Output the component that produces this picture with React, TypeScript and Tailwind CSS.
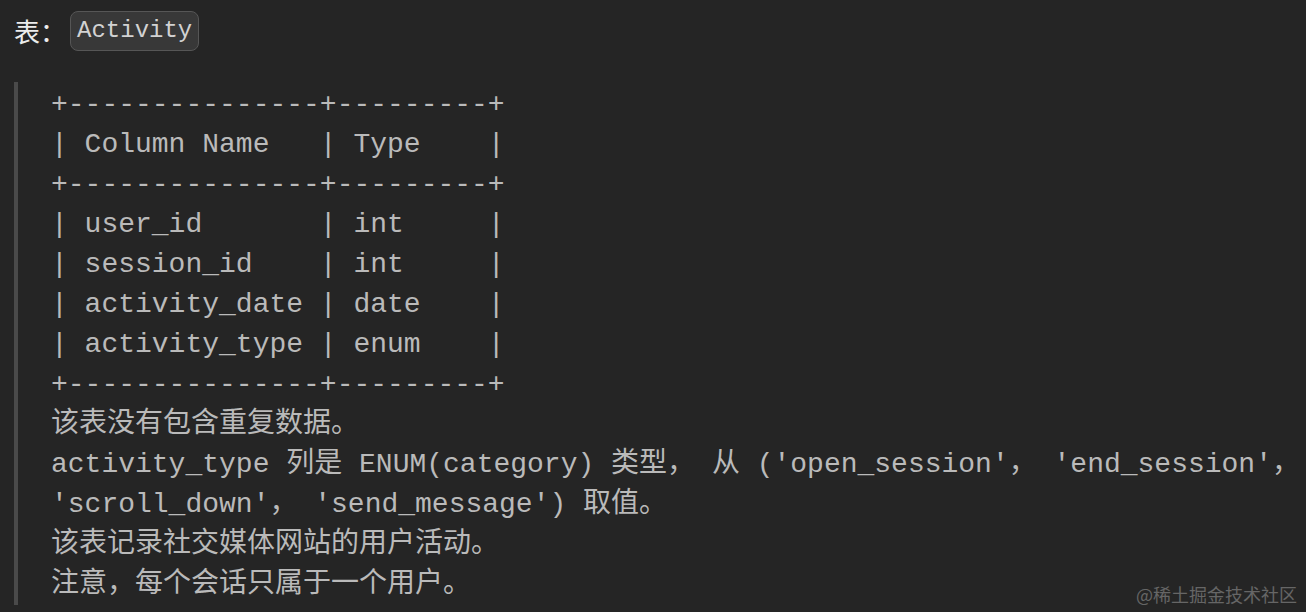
const tableLines = [
  "+---------------+---------+",
  "| Column Name   | Type    |",
  "+---------------+---------+",
  "| user_id       | int     |",
  "| session_id    | int     |",
  "| activity_date | date    |",
  "| activity_type | enum    |",
  "+---------------+---------+",
];

const noteLines = [
  "该表没有包含重复数据。",
  "activity_type 列是 ENUM(category) 类型， 从 ('open_session'， 'end_session'，",
  "'scroll_down'， 'send_message') 取值。",
  "该表记录社交媒体网站的用户活动。",
  "注意，每个会话只属于一个用户。",
];

const App = () => {
  return (
    <div className="relative w-full h-[612px] overflow-hidden bg-[#252525]">
      {/* Title */}
      <div className="flex items-center h-[40px] mt-[11px] pl-[14px]">
        <span className="text-[26px] leading-none text-[#ececec] font-['Noto_Sans_CJK_SC',sans-serif]">
          表：
        </span>
        <span className="ml-[4px] flex items-center h-[40px] px-[6px] rounded-[8px] border border-[#565656] bg-[#383838] text-[24px] text-[#d2d2d2] font-['Liberation_Mono','Noto_Sans_CJK_SC',monospace]">
          Activity
        </span>
      </div>

      {/* Blockquote */}
      <div className="mt-[31px] ml-[14px] border-l-4 border-[#4a4a4a] pl-[33px] pt-[3px]">
        <div className="whitespace-pre text-[28px] leading-[40px] text-[#bababa] font-['Liberation_Mono','Noto_Sans_CJK_SC',monospace]">
          {tableLines.map((line, i) => (
            <div key={i}>{line}</div>
          ))}
          {noteLines.map((line, i) => (
            <div key={"n" + i}>{line}</div>
          ))}
        </div>
      </div>

      {/* Watermark */}
      <div className="absolute right-[9px] bottom-[9px] text-[18px] leading-none text-[#666666] font-['Noto_Sans_CJK_SC',sans-serif]">
        @稀土掘金技术社区
      </div>
    </div>
  );
};

export default App;
